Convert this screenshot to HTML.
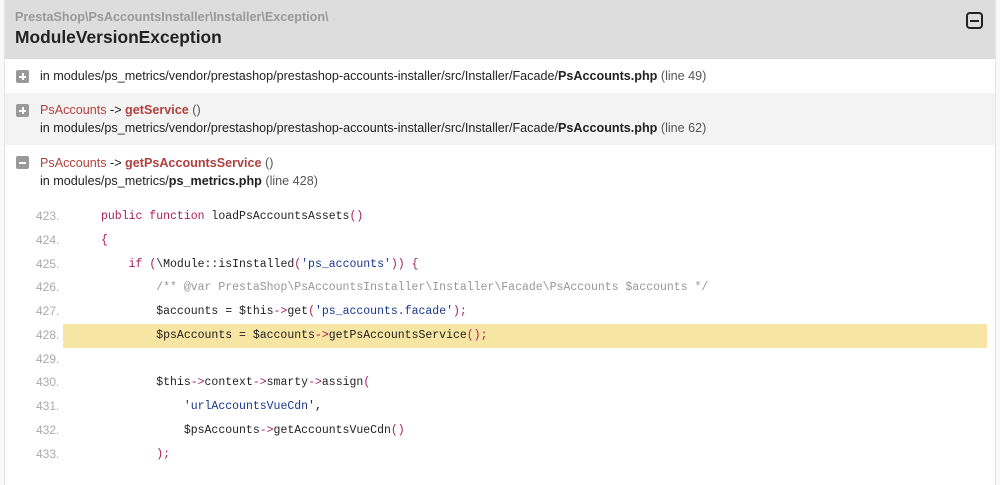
<!DOCTYPE html>
<html><head><meta charset="utf-8"><style>
body{margin:0;background:#f9f9f9;font-family:"Liberation Sans",sans-serif;font-size:12.6px;color:#222;width:1000px;height:485px;overflow:hidden}
.box{position:absolute;left:4px;top:0;width:992px;height:485px;background:#fff;border-left:1px solid #e4e4e4;border-right:1px solid #e4e4e4;box-sizing:border-box}
.hd{height:59px;background:#ddd;position:relative}
.ns{position:absolute;left:10px;top:10px;color:#999;font-weight:bold;font-size:12.6px}
.cl{position:absolute;left:10px;top:27px;font-weight:bold;font-size:17.4px;color:#222}
.tog{position:absolute;left:961px;top:12px;width:17px;height:17px;border:2px solid #222;border-radius:4px;box-sizing:border-box}
.tog:after{content:"";position:absolute;left:2px;right:2px;top:5.5px;height:2px;background:#222}
.row{position:absolute;left:0;width:990px}
.ic{position:absolute;left:11px;width:13px;height:13px;background:#999;border-radius:2px}
.ic:before{content:"";position:absolute;left:3px;right:3px;top:5.5px;height:2px;background:#fff}
.ic.p:after{content:"";position:absolute;top:3px;bottom:3px;left:5.5px;width:2px;background:#fff}
.t{position:absolute;left:35px;line-height:18px;white-space:nowrap}
.r{color:#b0413e}.rb{color:#b0413e;font-weight:bold}.g{color:#555}
.code{position:absolute;left:0;width:990px;font-family:"Liberation Mono",monospace;font-size:11.5px}
.ln{height:23.75px;line-height:23.75px;position:relative;white-space:pre}
.ln .n{position:absolute;left:31px;color:#aaa;font-family:"Liberation Sans",sans-serif;font-size:12px}
.ln .c{position:absolute;left:96px}
.hl{background:#f7e5a3;margin-left:58px;width:924px}
.hl .n{left:-27px}.hl .c{left:38px}
.k{color:#a71d5d}.s{color:#183691}.cm{color:#969896}
</style></head><body><div class="box">
<div class="hd"><div class="ns">PrestaShop\PsAccountsInstaller\Installer\Exception\</div><div class="cl">ModuleVersionException</div><div class="tog"></div></div>
<div class="row" style="top:60px;height:33px;background:#fff"><div class="ic p" style="top:10px"></div><div class="t" style="top:7px">in modules/ps_metrics/vendor/prestashop/prestashop-accounts-installer/src/Installer/Facade/<b>PsAccounts.php</b> <span class="g">(line 49)</span></div></div>
<div class="row" style="top:93px;height:52px;background:#f3f3f3"><div class="ic p" style="top:11px"></div><div class="t" style="top:8px"><span class="r">PsAccounts</span> -&gt; <span class="rb">getService</span> <span class="g">()</span><br>in modules/ps_metrics/vendor/prestashop/prestashop-accounts-installer/src/Installer/Facade/<b>PsAccounts.php</b> <span class="g">(line 62)</span></div></div>
<div class="row" style="top:146px;height:50px"><div class="ic" style="top:10px"></div><div class="t" style="top:8px"><span class="r">PsAccounts</span> -&gt; <span class="rb">getPsAccountsService</span> <span class="g">()</span><br>in modules/ps_metrics/<b>ps_metrics.php</b> <span class="g">(line 428)</span></div></div>
<div class="code" style="top:205px">
<div class="ln"><span class="n">423.</span><span class="c"><span class="k">public function</span> loadPsAccountsAssets<span class="k">()</span></span></div>
<div class="ln"><span class="n">424.</span><span class="c"><span class="k">{</span></span></div>
<div class="ln"><span class="n">425.</span><span class="c">    <span class="k">if (</span>\Module::isInstalled<span class="k">(</span><span class="s">'ps_accounts'</span><span class="k">)) {</span></span></div>
<div class="ln"><span class="n">426.</span><span class="c">        <span class="cm">/** @var PrestaShop\PsAccountsInstaller\Installer\Facade\PsAccounts $accounts */</span></span></div>
<div class="ln"><span class="n">427.</span><span class="c">        $accounts = $this<span class="k">-&gt;</span>get<span class="k">(</span><span class="s">'ps_accounts.facade'</span><span class="k">);</span></span></div>
<div class="ln hl"><span class="n">428.</span><span class="c">        $psAccounts = $accounts<span class="k">-&gt;</span>getPsAccountsService<span class="k">();</span></span></div>
<div class="ln"><span class="n">429.</span><span class="c"></span></div>
<div class="ln"><span class="n">430.</span><span class="c">        $this<span class="k">-&gt;</span>context<span class="k">-&gt;</span>smarty<span class="k">-&gt;</span>assign<span class="k">(</span></span></div>
<div class="ln"><span class="n">431.</span><span class="c">            <span class="s">'urlAccountsVueCdn'</span>,</span></div>
<div class="ln"><span class="n">432.</span><span class="c">            $psAccounts<span class="k">-&gt;</span>getAccountsVueCdn<span class="k">()</span></span></div>
<div class="ln"><span class="n">433.</span><span class="c">        <span class="k">);</span></span></div>
</div>
</div></body></html>
